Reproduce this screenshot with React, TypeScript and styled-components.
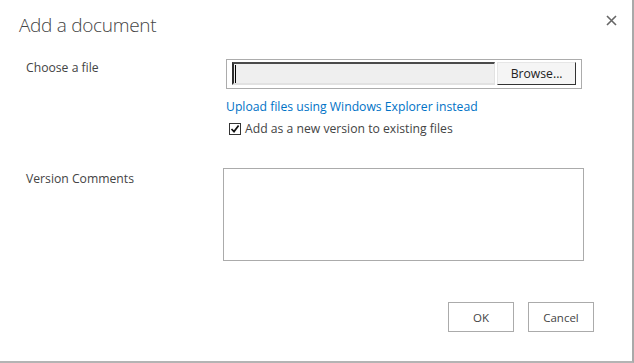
import React from "react";
import styled, { createGlobalStyle } from "styled-components";

const Global = createGlobalStyle`
  html, body { margin: 0; padding: 0; background: #fff; }
  body { font-family: "Open Sans", "Noto Sans", sans-serif; color: #444; }
  * { box-sizing: border-box; }
`;

const Dialog = styled.div`
  width: 634px;
  height: 363px;
  background: #fff;
  border-right: 2px solid #a9a9a9;
  border-bottom: 2px solid #b4b4b4;
  display: flex;
  flex-direction: column;
`;

const Header = styled.div`
  height: 59px;
  display: flex;
  justify-content: space-between;
  align-items: flex-start;
  padding: 11px 14px 0 19px;
`;

const Title = styled.h1`
  margin: 0;
  font-weight: 300;
  font-size: 19px;
  line-height: 28px;
  color: #444;
  letter-spacing: -0.3px;
`;

const CloseButton = styled.button`
  border: none;
  background: none;
  padding: 0;
  margin-top: 2px;
  width: 14px;
  height: 14px;
  display: flex;
  align-items: center;
  justify-content: center;
  cursor: pointer;
`;

const Grid = styled.div`
  display: grid;
  grid-template-columns: 200px 1fr;
  padding-left: 26px;
  row-gap: 30px;
`;

const Label = styled.div<{ $top?: number }>`
  font-size: 12.2px;
  line-height: 17px;
  padding-top: ${(p) => p.$top ?? 0}px;
  color: #444;
`;

const FieldCol = styled.div`
  display: flex;
  flex-direction: column;
  align-items: flex-start;
`;

const FileBox = styled.div`
  width: 356px;
  height: 30px;
  border: 1px solid #acacac;
  display: flex;
  align-items: stretch;
  padding: 2px 5px 3px 5px;
  gap: 2px;
`;

const FileText = styled.div`
  width: 264px;
  background: #efefef;
  border-top: 2px solid #4a4a4a;
  border-left: 2px solid #2e2e2e;
  border-bottom: 2px solid #e2e2e2;
  border-right: 1px solid #e2e2e2;
  display: flex;
  align-items: center;
  padding-left: 1px;
`;

const Caret = styled.span`
  width: 1px;
  height: 18px;
  background: #000;
`;

const BrowseButton = styled.button`
  width: 79px;
  background: #f5f5f5;
  border-top: 1px solid #e6e6e6;
  border-left: 1px solid #e6e6e6;
  border-right: 1px solid #333;
  border-bottom: 1px solid #333;
  font-family: "Open Sans", "Noto Sans", sans-serif;
  font-size: 12.2px;
  color: #222;
  padding: 0;
  padding-bottom: 1px;
`;

const Link = styled.a`
  margin-top: 9px;
  font-size: 12.2px;
  line-height: 18px;
  color: #0072c6;
  text-decoration: none;
  cursor: pointer;
`;

const CheckRow = styled.label`
  margin-top: 4px;
  margin-left: 3px;
  display: flex;
  align-items: center;
  gap: 4px;
  font-size: 12.2px;
  line-height: 18px;
  color: #444;
`;

const CheckBox = styled.span`
  width: 12px;
  height: 12px;
  border: 1px solid #333;
  background: #fff;
  display: flex;
  align-items: center;
  justify-content: center;
`;

const TextArea = styled.textarea`
  margin-left: -3px;
  width: 361px;
  height: 93px;
  border: 1px solid #ababab;
  resize: none;
  outline: none;
  font-family: inherit;
`;

const Footer = styled.div`
  margin-top: 41px;
  display: flex;
  justify-content: flex-end;
  gap: 14px;
  padding-right: 38px;
`;

const ActionButton = styled.button`
  width: 66px;
  height: 30px;
  border: 1px solid #ababab;
  background: #fff;
  font-family: "Open Sans", "Noto Sans", sans-serif;
  font-size: 11.5px;
  color: #444;
  padding: 0;
`;

export default function App() {
  return (
    <>
      <Global />
      <Dialog>
        <Header>
          <Title>Add a document</Title>
          <CloseButton aria-label="Close">
            <svg width="11" height="11" viewBox="0 0 11 11">
              <path d="M1 1 L10 10 M10 1 L1 10" stroke="#666" strokeWidth="1.6" />
            </svg>
          </CloseButton>
        </Header>
        <Grid>
          <Label>Choose a file</Label>
          <FieldCol>
            <FileBox>
              <FileText>
                <Caret />
              </FileText>
              <BrowseButton>Browse...</BrowseButton>
            </FileBox>
            <Link>Upload files using Windows Explorer instead</Link>
            <CheckRow>
              <CheckBox>
                <svg width="10" height="10" viewBox="0 0 10 10">
                  <path d="M1.5 5 L4 7.6 L8.6 1.5" fill="none" stroke="#111" strokeWidth="1.7" />
                </svg>
              </CheckBox>
              Add as a new version to existing files
            </CheckRow>
          </FieldCol>
          <Label $top={2}>Version Comments</Label>
          <FieldCol>
            <TextArea />
          </FieldCol>
        </Grid>
        <Footer>
          <ActionButton>OK</ActionButton>
          <ActionButton>Cancel</ActionButton>
        </Footer>
      </Dialog>
    </>
  );
}
